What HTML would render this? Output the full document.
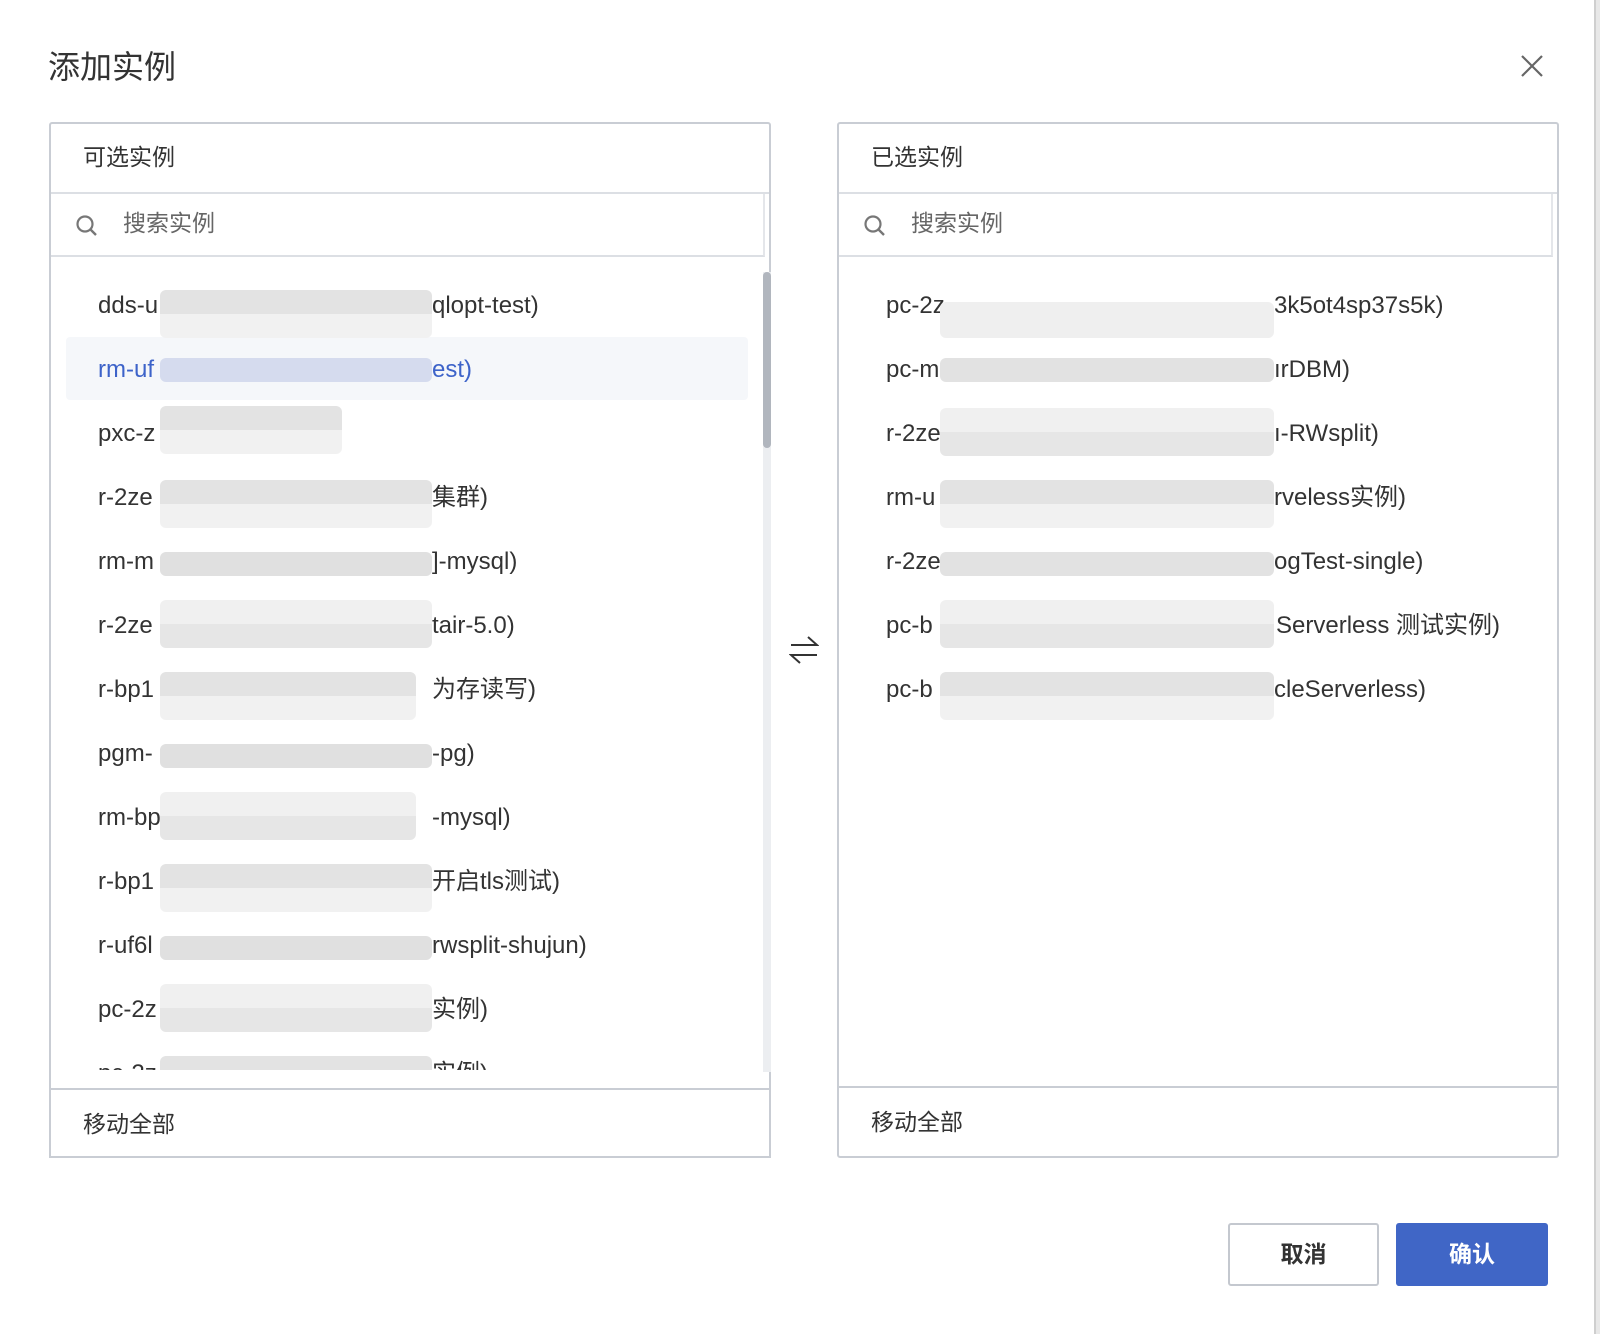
<!DOCTYPE html>
<html><head><meta charset="utf-8"><style>
*{margin:0;padding:0;box-sizing:border-box}
body{width:1600px;height:1334px;background:#fff;position:relative;overflow:hidden;font-family:"Liberation Sans","Noto Sans CJK SC",sans-serif;color:#333}
.a{position:absolute;white-space:nowrap}
.panel{position:absolute;top:122px;width:722px;height:1036px;border:2px solid #c9cdd4;border-radius:3px;background:#fff}
.hd{position:absolute;left:0;right:0;top:0;height:70px;border-bottom:2px solid #dcdfe4;font-size:23px;line-height:30px;color:#333;padding:18px 0 0 32px}
.sr{position:absolute;left:0;right:4px;top:70px;height:63px;border-bottom:2px solid #dcdfe4;border-right:2px solid #e4e6ea}
.sr span{position:absolute;left:72px;top:14px;font-size:23px;line-height:30px;color:#666}
.ft{position:absolute;left:0;right:0;bottom:0;height:70px;border-top:2px solid #c9cdd4;font-size:23px;line-height:30px;padding:19px 0 0 32px}
.it{font-size:24px;line-height:30px;color:#333}
.bl{position:absolute;border-radius:6px;background:linear-gradient(#e3e3e3 0,#e3e3e3 50%,#f1f1f1 50%,#f1f1f1 100%)}
</style></head><body>
<div class="a" style="left:48px;top:47px;font-size:32px;line-height:40px;color:#333">添加实例</div>
<svg class="a" style="left:1520px;top:54px" width="24" height="24" viewBox="0 0 24 24"><path d="M2 2L22 22M22 2L2 22" stroke="#666" stroke-width="2.2" fill="none"/></svg>
<div class="a" style="left:1594px;top:0;width:6px;height:1334px;background:#e8e8e8;border-left:2px solid #cfcfcf"></div>

<div class="panel" style="left:49px">
 <div class="hd">可选实例</div>
 <div class="sr"><svg style="position:absolute;left:24px;top:20px" width="24" height="24" viewBox="0 0 24 24"><circle cx="10" cy="10" r="7.5" stroke="#777" stroke-width="2.2" fill="none"/><path d="M15.5 15.5L21 21" stroke="#777" stroke-width="2.4"/></svg><span>搜索实例</span></div>
 <div class="a" style="left:712px;top:148px;width:8px;height:800px;background:#eceef1"></div>
 <div class="a" style="left:712px;top:148px;width:8px;height:176px;background:#b1b6be;border-radius:4px"></div>
 <div class="a" style="left:15px;top:213px;width:682px;height:63px;background:#f5f7fa;border-radius:4px"></div>
</div>
<div class="panel" style="left:837px">
 <div class="hd">已选实例</div>
 <div class="sr"><svg style="position:absolute;left:24px;top:20px" width="24" height="24" viewBox="0 0 24 24"><circle cx="10" cy="10" r="7.5" stroke="#777" stroke-width="2.2" fill="none"/><path d="M15.5 15.5L21 21" stroke="#777" stroke-width="2.4"/></svg><span>搜索实例</span></div>
 <div class="ft">移动全部</div>
</div>
<svg class="a" style="left:789px;top:635px" width="30" height="30" viewBox="0 0 30 30"><path d="M2 10H28L19 2M28 20H2L11 28" stroke="#333" stroke-width="2" fill="none"/></svg>

<div class="a" style="left:49px;top:270px;width:710px;height:800px;overflow:hidden">
<div class="a it" style="left:49px;top:21px">dds-u</div><div class="bl" style="left:111px;top:20px;width:272px;height:48px"></div><div class="a it" style="left:383px;top:21px">qlopt-test)</div>
<div class="a it" style="left:49px;top:85px;color:#3d63c9">rm-uf</div><div class="bl" style="left:111px;top:88px;width:272px;height:24px;background:#d5dbee"></div><div class="a it" style="left:383px;top:85px;color:#3d63c9">est)</div>
<div class="a it" style="left:49px;top:149px">pxc-z</div><div class="bl" style="left:111px;top:136px;width:182px;height:48px"></div>
<div class="a it" style="left:49px;top:213px">r-2ze</div><div class="bl" style="left:111px;top:210px;width:272px;height:48px"></div><div class="a it" style="left:383px;top:213px">集群)</div>
<div class="a it" style="left:49px;top:277px">rm-m</div><div class="bl" style="left:111px;top:282px;width:272px;height:24px;background:#e0e0e0"></div><div class="a it" style="left:383px;top:277px">]-mysql)</div>
<div class="a it" style="left:49px;top:341px">r-2ze</div><div class="bl" style="left:111px;top:330px;width:272px;height:48px;background:linear-gradient(#f0f0f0 50%,#e6e6e6 50%)"></div><div class="a it" style="left:383px;top:341px">tair-5.0)</div>
<div class="a it" style="left:49px;top:405px">r-bp1</div><div class="bl" style="left:111px;top:402px;width:256px;height:48px"></div><div class="a it" style="left:383px;top:405px">为存读写)</div>
<div class="a it" style="left:49px;top:469px">pgm-</div><div class="bl" style="left:111px;top:474px;width:272px;height:24px;background:#e0e0e0"></div><div class="a it" style="left:383px;top:469px">-pg)</div>
<div class="a it" style="left:49px;top:533px">rm-bp</div><div class="bl" style="left:111px;top:522px;width:256px;height:48px;background:linear-gradient(#f0f0f0 50%,#e6e6e6 50%)"></div><div class="a it" style="left:383px;top:533px">-mysql)</div>
<div class="a it" style="left:49px;top:597px">r-bp1</div><div class="bl" style="left:111px;top:594px;width:272px;height:48px"></div><div class="a it" style="left:383px;top:597px">开启tls测试)</div>
<div class="a it" style="left:49px;top:661px">r-uf6l</div><div class="bl" style="left:111px;top:666px;width:272px;height:24px;background:#e0e0e0"></div><div class="a it" style="left:383px;top:661px">rwsplit-shujun)</div>
<div class="a it" style="left:49px;top:725px">pc-2z</div><div class="bl" style="left:111px;top:714px;width:272px;height:48px;background:linear-gradient(#f0f0f0 50%,#e6e6e6 50%)"></div><div class="a it" style="left:383px;top:725px">实例)</div>
<div class="a it" style="left:49px;top:789px">pc-2z</div><div class="bl" style="left:111px;top:786px;width:272px;height:48px"></div><div class="a it" style="left:383px;top:789px">实例)</div>
</div>
<div class="a" style="left:49px;top:1088px;width:722px;height:70px;border:2px solid #c9cdd4;font-size:23px;line-height:30px;padding:19px 0 0 32px;background:#fff">移动全部</div>

<div class="a" style="left:839px;top:270px;width:700px;height:780px;overflow:hidden">
<div class="a it" style="left:47px;top:21px">pc-2z</div><div class="bl" style="left:101px;top:32px;width:334px;height:36px;background:#efefef"></div><div class="a it" style="left:435px;top:21px">3k5ot4sp37s5k)</div>
<div class="a it" style="left:47px;top:85px">pc-m</div><div class="bl" style="left:101px;top:88px;width:334px;height:24px;background:#e2e2e2"></div><div class="a it" style="left:435px;top:85px">ırDBM)</div>
<div class="a it" style="left:47px;top:149px">r-2ze</div><div class="bl" style="left:101px;top:138px;width:334px;height:48px;background:linear-gradient(#f0f0f0 50%,#e6e6e6 50%)"></div><div class="a it" style="left:435px;top:149px">ı-RWsplit)</div>
<div class="a it" style="left:47px;top:213px">rm-u</div><div class="bl" style="left:101px;top:210px;width:334px;height:48px"></div><div class="a it" style="left:435px;top:213px">rveless实例)</div>
<div class="a it" style="left:47px;top:277px">r-2ze</div><div class="bl" style="left:101px;top:282px;width:334px;height:24px;background:#e2e2e2"></div><div class="a it" style="left:435px;top:277px">ogTest-single)</div>
<div class="a it" style="left:47px;top:341px">pc-b</div><div class="bl" style="left:101px;top:330px;width:334px;height:48px;background:linear-gradient(#f0f0f0 50%,#e6e6e6 50%)"></div><div class="a it" style="left:437px;top:341px">Serverless 测试实例)</div>
<div class="a it" style="left:47px;top:405px">pc-b</div><div class="bl" style="left:101px;top:402px;width:334px;height:48px"></div><div class="a it" style="left:435px;top:405px">cleServerless)</div>
</div>

<div class="a" style="left:1228px;top:1223px;width:151px;height:63px;border:2px solid #c4c8cf;border-radius:3px;font-size:23px;font-weight:bold;text-align:center;line-height:59px;color:#333">取消</div>
<div class="a" style="left:1396px;top:1223px;width:152px;height:63px;background:#4066c6;border-radius:3px;font-size:23px;font-weight:bold;text-align:center;line-height:63px;color:#fff">确认</div>
</body></html>
